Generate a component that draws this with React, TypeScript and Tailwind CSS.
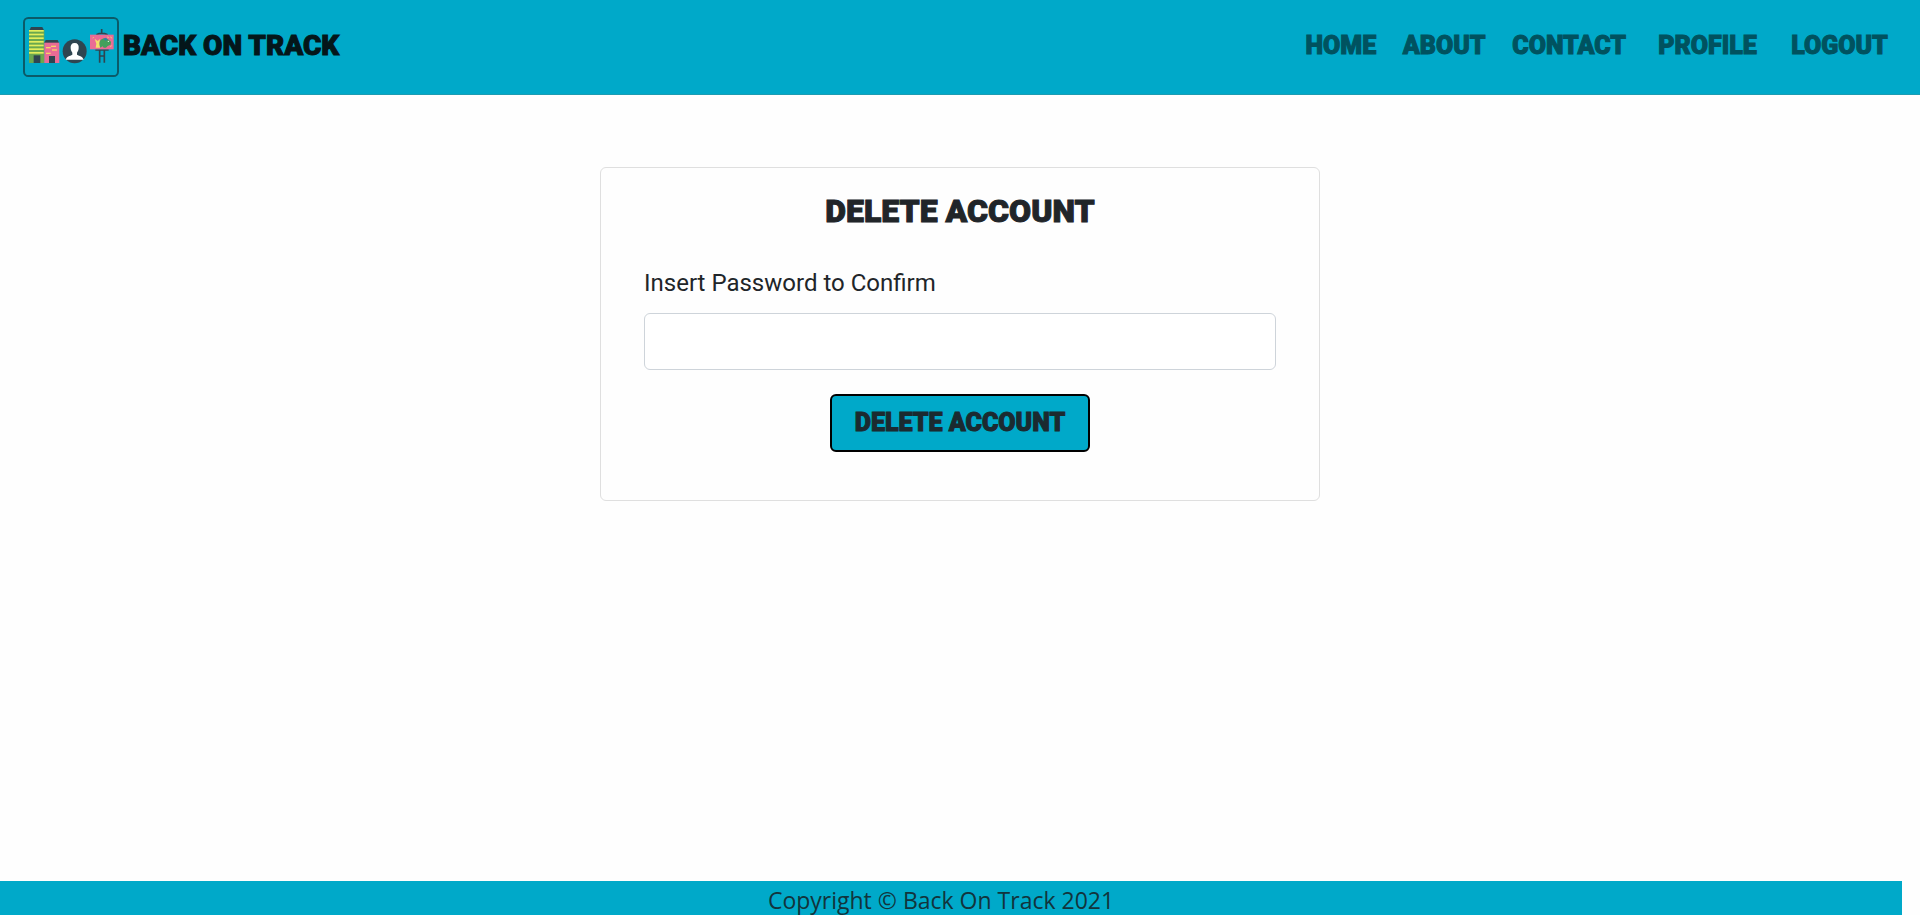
const navItems = [
  { label: "HOME", width: "min-w-[70px]" },
  { label: "ABOUT", width: "min-w-[84px]" },
  { label: "CONTACT", width: "min-w-[112px]" },
  { label: "PROFILE", width: "min-w-[111px]" },
  { label: "LOGOUT", width: "min-w-[101px]" },
];

function Logo() {
  return (
    <svg viewBox="0 0 288 180" className="h-15 w-24 shrink-0" aria-hidden="true">
      <rect x="3" y="3" width="282" height="174" rx="13" fill="none" stroke="#0b5a69" strokeWidth="6" />
      {/* tower */}
      <path d="M24 30h34l5 10H19z" fill="#2f4550" />
      <rect x="18" y="39" width="46" height="99" fill="#6aa84f" />
      {[39, 50, 61, 72, 83, 94, 105].map((y) => (
        <rect key={y} x="18" y={y} width="44" height="5" fill="#e3ee5c" />
      ))}
      <rect x="32" y="115" width="20" height="23" fill="#2f4550" />
      {/* house */}
      <path d="M68 69h36l4 9H64z" fill="#2f4550" />
      <rect x="64" y="77" width="45" height="61" fill="#ea6b95" />
      <g fill="#f6d36b">
        <rect x="84" y="86" width="15" height="4" />
        <rect x="69" y="90" width="14" height="4" />
        <rect x="87" y="97" width="15" height="4" />
        <rect x="69" y="107" width="14" height="4" />
      </g>
      <rect x="78" y="117" width="18" height="21" fill="#2f4550" />
      {/* person */}
      <circle cx="155" cy="103" r="36" fill="#2f4550" />
      <path
        d="M155 78c9 0 13 6 12 15 0 7-3 11-5 14v6c8 4 17 5 20 15H128c3-10 12-11 20-15v-6c-2-3-5-7-5-14-1-9 3-15 12-15z"
        fill="#fff"
      />
      {/* easel */}
      <path d="M236 36v12M220 53q16-8 34 0M217 99h40M230 99v38M244 99v38M230 117h14" stroke="#2f4550" strokeWidth="5" fill="none" />
      <rect x="201" y="53" width="71" height="44" fill="#ea6b95" />
      <path d="M215 65l9 7 7-6-2 12 2 14h-13l2-12z" fill="#f3df68" />
      <path d="M231 72c6-10 17-10 24-5l9 7-1 9-9 4-5 5h-7l-3-4-7 4c-3-8-3-14-1-20z" fill="#43a05b" />
      <path d="M241 65l8-3 5 6-7 3z" fill="#2e80a8" />
      <path d="M253 60l4 2M263 59l3 5M262 89l4-3M209 63l3-2" stroke="#f3df68" strokeWidth="3" />
      <circle cx="256" cy="73" r="2" fill="#fff" />
    </svg>
  );
}

export default function App() {
  return (
    <div className="flex min-h-screen flex-col bg-[#fefefe] font-['Roboto','Liberation_Sans',sans-serif] text-[#212529]">
      <header className="flex items-center justify-between border-b border-[#1d9cb2] bg-[#00a9c9] py-[17px] pr-[30px] pl-[23px]">
        <a href="#" className="flex items-center gap-1">
          <Logo />
          <span className="pb-0.5 text-[28px] leading-9 font-black text-[#04161a] [-webkit-text-stroke:1px_currentColor]">
            BACK ON TRACK
          </span>
        </a>
        <nav className="flex gap-[26px] pb-0.5 text-center text-[25px] leading-9 font-black text-[#00525f] [-webkit-text-stroke:1px_currentColor]">
          {navItems.map((item) => (
            <a key={item.label} href="#" className={item.width}>
              {item.label}
            </a>
          ))}
        </nav>
      </header>

      <main className="flex grow flex-col items-center pt-[72px]">
        <form
          className="w-full max-w-[720px] rounded-md border border-[#dfdfdf] px-[43px] pt-[23px] pb-12"
          onSubmit={(event) => event.preventDefault()}
        >
          <h1 className="text-center text-[32px] leading-10 font-black [-webkit-text-stroke:1px_currentColor]">
            DELETE ACCOUNT
          </h1>
          <label htmlFor="password" className="mt-[34px] block text-2xl leading-9">
            Insert Password to Confirm
          </label>
          <input
            id="password"
            type="password"
            className="mt-3 block h-[57px] w-full rounded-md border border-[#ced4da] bg-white px-3 text-2xl"
          />
          <button
            type="submit"
            className="mx-auto mt-6 block h-[58px] min-w-[260px] rounded-md border-2 border-black bg-[#00a9c9] px-4 text-[25px] leading-9 font-black text-[#1b2a30] [-webkit-text-stroke:1px_currentColor]"
          >
            DELETE ACCOUNT
          </button>
        </form>
      </main>

      <footer className="mr-[18px] h-[34px] bg-[#00a9c9] pt-px pr-5 text-center font-['Open_Sans','Noto_Sans',sans-serif] text-[23px] leading-9 text-[#12343c]">
        Copyright © Back On Track 2021
      </footer>
    </div>
  );
}
